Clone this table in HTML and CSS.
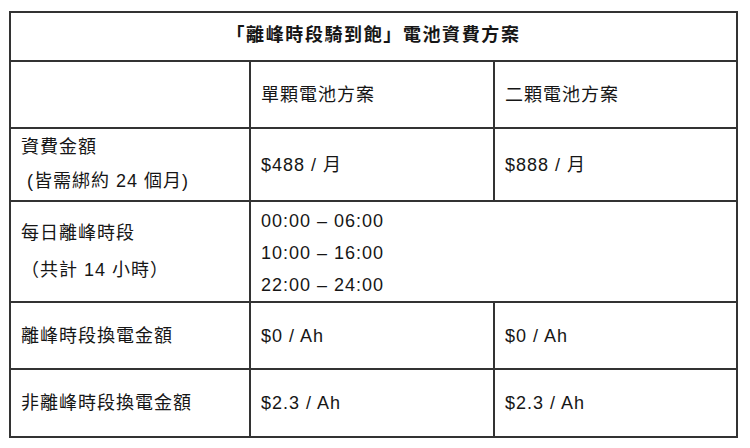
FILE: index.html
```html
<!DOCTYPE html>
<html lang="zh-Hant">
<head>
<meta charset="utf-8">
<title>離峰時段騎到飽 電池資費方案</title>
<link rel="stylesheet" href="styles.css">
</head>
<body>
<table class="plan">
  <colgroup>
    <col class="col-label">
    <col class="col-single">
    <col class="col-double">
  </colgroup>
  <thead>
    <tr class="row-title">
      <th colspan="3">「離峰時段騎到飽」電池資費方案</th>
    </tr>
    <tr class="row-head">
      <td></td>
      <td>單顆電池方案</td>
      <td>二顆電池方案</td>
    </tr>
  </thead>
  <tbody>
    <tr class="row-fee">
      <td class="fee-label">
        <div>資費金額</div>
        <div>&nbsp;(皆需綁約 24 個月)</div>
      </td>
      <td>$488 / 月</td>
      <td>$888 / 月</td>
    </tr>
    <tr class="row-time">
      <td class="time-label">
        <div>每日離峰時段</div>
        <div>（共計 14 小時）</div>
      </td>
      <td colspan="2" class="times">
        <div>00:00 – 06:00</div>
        <div>10:00 – 16:00</div>
        <div>22:00 – 24:00</div>
      </td>
    </tr>
    <tr class="row-off">
      <td>離峰時段換電金額</td>
      <td>$0 / Ah</td>
      <td>$0 / Ah</td>
    </tr>
    <tr class="row-peak">
      <td>非離峰時段換電金額</td>
      <td>$2.3 / Ah</td>
      <td>$2.3 / Ah</td>
    </tr>
  </tbody>
</table>
</body>
</html>
```
FILE: styles.css
```css
html, body {
  margin: 0;
  padding: 0;
  background: #ffffff;
}

body {
  font-family: "Liberation Sans", "Noto Sans CJK TC", sans-serif;
  color: #161616;
}

.plan {
  margin: 11px 0 0 9px;
  width: 729px;
  table-layout: fixed;
  border-collapse: separate;
  border-spacing: 2px;
  background: #333333;
  font-size: 18px;
  letter-spacing: 1px;
  line-height: 24px;
}

.col-label { width: 238px; }
.col-single { width: 242px; }
.col-double { width: 241px; }

.plan th,
.plan td {
  background: #ffffff;
  padding: 0 10px;
  vertical-align: middle;
  text-align: left;
  font-weight: 400;
}

.plan th {
  text-align: center;
  font-weight: 700;
  letter-spacing: 1.6px;
  padding-bottom: 3px;
}

.row-title { height: 47px; }
.row-head { height: 65px; }
.row-fee { height: 71px; }
.row-time { height: 99px; }
.row-off { height: 65px; }
.row-peak { height: 66px; }

.fee-label { line-height: 33.5px; }
.time-label { line-height: 37px; }

.plan .times {
  line-height: 32px;
  padding-top: 3px;
}
```
